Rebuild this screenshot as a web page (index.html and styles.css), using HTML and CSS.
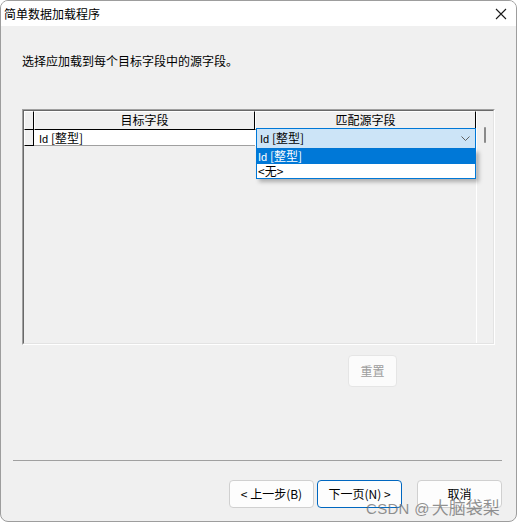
FILE: index.html
```html
<!DOCTYPE html>
<html lang="zh-CN">
<head>
<meta charset="utf-8">
<title>简单数据加载程序</title>
<link rel="stylesheet" href="styles.css">
</head>
<body>
<div class="window">
  <div class="titlebar">
    <span class="title">简单数据加载程序</span>
    <svg class="close" width="12" height="12" viewBox="0 0 12 12"><path d="M1 1 L11 11 M11 1 L1 11" stroke="#1a1a1a" stroke-width="1.1" fill="none"/></svg>
  </div>
  <div class="content">
    <p class="instruction">选择应加载到每个目标字段中的源字段。</p>
    <div class="grid-frame">
      <div class="grid-inner">
        <div class="grid-table">
          <div class="hcell rowhdr"></div>
          <div class="hcell">目标字段</div>
          <div class="hcell">匹配源字段</div>
          <div class="dcell rowhdr-d"></div>
          <div class="dcell value"><span class="id">Id</span> [整型]</div>
          <div class="dcell empty"></div>
          <div class="combo">
            <span><span class="id">Id</span> [整型]</span>
            <svg width="9" height="5" viewBox="0 0 9 5"><path d="M0.5 0.5 L4.5 4.5 L8.5 0.5" stroke="#606060" stroke-width="1" fill="none"/></svg>
          </div>
          <div class="dropdown">
            <div class="item selected"><span class="id">Id</span> [整型]</div>
            <div class="item">&lt;无&gt;</div>
          </div>
        </div>
        <div class="vscroll"><div class="thumb"></div></div>
      </div>
    </div>
    <div class="reset-row"><button class="btn reset" disabled>重置</button></div>
    <div class="separator"></div>
    <div class="buttons">
      <button class="btn">&lt; 上一步(B)</button>
      <button class="btn primary">下一页(N) &gt;</button>
      <button class="btn cancel">取消</button>
    </div>
  </div>
  <div class="watermark"><span class="wm-latin">CSDN @</span><span class="wm-cjk">大脑袋梨</span></div>
</div>
</body>
</html>
```
FILE: styles.css
```css
* { box-sizing: border-box; }
html, body { margin: 0; padding: 0; background: #ffffff; }
body {
  font-family: "Noto Sans CJK SC", "Noto Sans", sans-serif;
  font-size: 12px;
  color: #000;
}
.window {
  position: relative;
  width: 517px;
  height: 522px;
  border: 1px solid #9d9d9d;
  border-radius: 8px;
  background: #f0f0f0;
  overflow: hidden;
}
.titlebar {
  height: 25px;
  background: #ffffff;
  display: flex;
  align-items: center;
  justify-content: space-between;
  padding-left: 3px;
  padding-right: 9px;
}
.title { font-size: 12px; line-height: 16px; }
.close { display: block; margin-top: 1px; }
.content { display: flex; flex-direction: column; }
.instruction {
  margin: 27px 0 0 21px;
  font-size: 12px;
  line-height: 16px;
}
.grid-frame {
  margin: 40px 0 0 21px;
  width: 473px;
  height: 236px;
  border-style: solid;
  border-width: 1px;
  border-color: #a0a0a0 #ffffff #ffffff #a0a0a0;
}
.grid-inner {
  height: 100%;
  display: flex;
  border-style: solid;
  border-width: 1px;
  border-color: #696969 #e3e3e3 #e3e3e3 #696969;
  background: #f0f0f0;
}
.grid-table {
  position: relative;
  width: 452px;
  display: grid;
  grid-template-columns: 10px 221px 221px;
  grid-template-rows: 19px 16px;
  align-content: start;
}
.hcell {
  border-top: 1px solid #ffffff;
  border-left: 1px solid #ffffff;
  border-right: 1px solid #000;
  border-bottom: 1px solid #000;
  background: #f0f0f0;
  text-align: center;
  font-size: 12px;
  line-height: 16px;
}
.dcell { font-size: 12px; line-height: 14px; }
.rowhdr-d {
  border-left: 1px solid #ffffff;
  border-right: 1px solid #000;
  border-bottom: 1px solid #000;
  background: #f0f0f0;
}
.value {
  background: #ffffff;
  border-bottom: 1px solid #a0a0a0;
  padding-left: 5px;
  padding-top: 1px;
}
.empty { background: #ffffff; }
.id { font-family: "Liberation Sans", sans-serif; font-size: 11px; }
.combo {
  position: absolute;
  left: 232px;
  top: 17px;
  width: 220px;
  height: 21px;
  background: #cce4f7;
  border: 1px solid #0078d7;
  display: flex;
  align-items: center;
  justify-content: space-between;
  padding: 0 5px 0 3px;
  line-height: 14px;
}
.combo svg { display: block; }
.dropdown {
  position: absolute;
  left: 232px;
  top: 38px;
  width: 220px;
  height: 30px;
  border: 1px solid #0078d7;
  border-top: none;
  background: #ffffff;
  box-shadow: 3px 3px 4px rgba(0, 0, 0, 0.28);
}
.item {
  height: 14px;
  line-height: 14px;
  padding-left: 1px;
}
.item.selected {
  background: #0078d7;
  color: #ffffff;
  height: 15px;
}
.vscroll {
  width: 17px;
  border-left: 1px solid #ffffff;
  padding: 16px 0 0 7px;
}
.thumb {
  width: 2px;
  height: 16px;
  background: #8a8a8a;
  border-radius: 1px;
}
.reset-row { margin: 10px 0 0 347px; display: flex; }
.btn {
  font-family: "Noto Sans CJK SC", "Noto Sans", sans-serif;
  font-size: 12px;
  line-height: 16px;
  color: #000;
  background: #fdfdfd;
  border: 1px solid #d0d0d0;
  border-radius: 4px;
  padding: 0;
  width: 85px;
  height: 28px;
}
.btn.reset {
  width: 49px;
  height: 32px;
  color: #9d9d9d;
  background: #fbfbfb;
  border-color: #e5e5e5;
}
.separator {
  margin: 73px 0 0 12px;
  width: 489px;
  height: 1px;
  background: #a0a0a0;
}
.buttons {
  margin: 19px 0 0 228px;
  display: flex;
  gap: 3px;
}
.btn.primary { border-color: #0067c0; }
.btn.cancel { margin-left: 12px; }
.watermark {
  position: absolute;
  left: 365px;
  top: 493px;
  color: rgba(110, 110, 110, 0.75);
  white-space: nowrap;
  display: flex;
  align-items: baseline;
}
.wm-latin { font-family: "Liberation Sans", sans-serif; font-size: 15px; letter-spacing: 0.3px; }
.wm-cjk { font-family: "Noto Sans CJK SC", sans-serif; font-size: 17px; margin-left: 2px; }
```
